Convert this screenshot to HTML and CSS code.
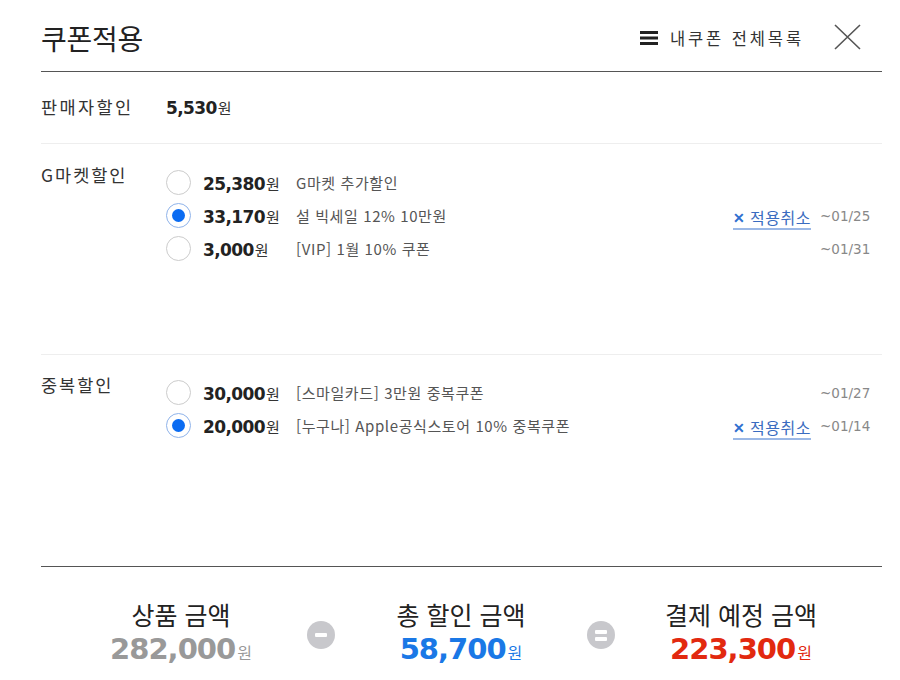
FILE: index.html
```html
<!DOCTYPE html>
<html lang="ko">
<head>
<meta charset="utf-8">
<link rel="stylesheet" href="styles.css">
</head>
<body>
<div class="wrap">
  <header class="head">
    <h1 class="title">쿠폰적용</h1>
    <div class="head-right">
      <a class="mylist">
        <svg class="ham" width="18" height="14" viewBox="0 0 18 14"><rect x="0" y="0" width="18" height="3" fill="#222"/><rect x="0" y="5.5" width="18" height="3" fill="#222"/><rect x="0" y="11" width="18" height="3" fill="#222"/></svg>
        <span>내쿠폰 전체목록</span>
      </a>
      <svg class="close" width="27" height="26" viewBox="0 0 27 26"><path d="M1 1 L26 25 M26 1 L1 25" stroke="#555" stroke-width="1.6" fill="none"/></svg>
    </div>
  </header>

  <section class="sec sec-seller">
    <div class="label">판매자할인</div>
    <div class="amt"><b>5,530</b><span class="won">원</span></div>
  </section>

  <section class="sec sec-gmarket">
    <div class="label">G마켓할인</div>
    <ul class="list">
      <li class="row">
        <span class="radio"></span>
        <span class="amt"><b>25,380</b><span class="won">원</span></span>
        <span class="desc">G마켓 추가할인</span>
        <span class="date"></span>
      </li>
      <li class="row">
        <span class="radio on"></span>
        <span class="amt"><b>33,170</b><span class="won">원</span></span>
        <span class="desc">설 빅세일 12% 10만원</span>
        <a class="cancel"><span class="x">✕</span>적용취소</a>
        <span class="date">~01/25</span>
      </li>
      <li class="row">
        <span class="radio"></span>
        <span class="amt"><b>3,000</b><span class="won">원</span></span>
        <span class="desc">[VIP] 1월 10% 쿠폰</span>
        <span class="date">~01/31</span>
      </li>
    </ul>
  </section>

  <section class="sec sec-dup">
    <div class="label">중복할인</div>
    <ul class="list">
      <li class="row">
        <span class="radio"></span>
        <span class="amt"><b>30,000</b><span class="won">원</span></span>
        <span class="desc">[스마일카드] 3만원 중복쿠폰</span>
        <span class="date">~01/27</span>
      </li>
      <li class="row">
        <span class="radio on"></span>
        <span class="amt"><b>20,000</b><span class="won">원</span></span>
        <span class="desc">[누구나] Apple공식스토어 10% 중복쿠폰</span>
        <a class="cancel"><span class="x">✕</span>적용취소</a>
        <span class="date">~01/14</span>
      </li>
    </ul>
  </section>

  <footer class="sum">
    <div class="col">
      <div class="sum-label">상품 금액</div>
      <div class="sum-amt gray"><b>282,000</b><span class="won">원</span></div>
    </div>
    <div class="op"><span class="circ"><span class="bar"></span></span></div>
    <div class="col">
      <div class="sum-label">총 할인 금액</div>
      <div class="sum-amt blue"><b>58,700</b><span class="won">원</span></div>
    </div>
    <div class="op"><span class="circ eq"><span class="bar"></span><span class="bar"></span></span></div>
    <div class="col">
      <div class="sum-label">결제 예정 금액</div>
      <div class="sum-amt red"><b>223,300</b><span class="won">원</span></div>
    </div>
  </footer>
</div>
</body>
</html>
```

FILE: styles.css
```css
* { box-sizing: border-box; }
html, body { margin: 0; padding: 0; background: #fff; }
body {
  font-family: "Noto Sans CJK KR", "Noto Sans", sans-serif;
  color: #333;
}
.wrap { width: 900px; padding: 0 18px 0 41px; }
ul { list-style: none; margin: 0; padding: 0; }
a { cursor: pointer; }

.head {
  height: 72px;
  border-bottom: 1px solid #555;
  display: flex;
  align-items: center;
  justify-content: space-between;
  padding-top: 4px;
}
.title {
  margin: 0;
  font-size: 28px;
  font-weight: 400;
  color: #222;
  letter-spacing: -0.3px;
}
.head-right { display: flex; align-items: center; }
.mylist { display: flex; align-items: center; color: #333; font-size: 16.5px; letter-spacing: 2.9px; }
.ham { margin-right: 12px; }
.close { margin-left: 30px; margin-right: 21px; margin-top: -2px; }

.sec {
  display: flex;
  align-items: flex-start;
  border-bottom: 1px solid #eee;
}
.label {
  width: 125px;
  font-size: 17.5px;
  line-height: 24px;
  color: #333;
  letter-spacing: 2px;
}
.sec-seller { height: 72px; padding-top: 23px; }
.sec-seller .label { letter-spacing: 2.4px; }
.sec-gmarket { height: 211px; padding-top: 30px; }
.sec-dup { height: 212px; padding-top: 29px; border-bottom: 1px solid #555; }
.sec-gmarket .label, .sec-dup .label { margin-top: -11px; }

.amt b {
  font-family: "DejaVu Sans", sans-serif;
  font-weight: bold;
  font-size: 17px;
  letter-spacing: -0.6px;
  color: #222;
}
.won { font-size: 15px; color: #333; margin-left: 1px; }

.list { flex: 1; }
.row {
  display: flex;
  align-items: center;
  height: 33px;
  margin-top: -8px;
}
.row + .row { margin-top: 0; }
.radio {
  width: 25px; height: 25px;
  border: 1px solid #ccc;
  border-radius: 50%;
  margin-right: 12px;
  flex: none;
  position: relative;
}
.radio.on { border-color: #8fb3ea; }
.radio.on::after {
  content: "";
  position: absolute;
  left: 5px; top: 5px;
  width: 13px; height: 13px;
  border-radius: 50%;
  background: #0b6cf2;
}
.row .amt { width: 93px; flex: none; }
.desc { flex: 1; font-size: 15px; color: #555; font-weight: 400; letter-spacing: 0.6px; }
.cancel {
  display: flex; align-items: center;
  color: #3a6cc0;
  font-size: 16px;
  border-bottom: 2px solid #9bb8e6;
  line-height: 20px;
  margin-top: 6px;
  padding-bottom: 1px;
  margin-right: 9px;
  letter-spacing: 0.5px;
}
.cancel .x { font-size: 14px; font-weight: bold; color: #2f6fd0; margin-right: 5px; }
.date {
  font-family: "DejaVu Sans", sans-serif;
  font-size: 13.5px;
  color: #888;
  width: 50px;
  margin-right: 12px;
  text-align: left;
}

.sum {
  display: flex;
  justify-content: flex-start;
  padding-left: 40px;
  padding-top: 32px;
}
.col { width: 200px; text-align: center; }
.sum-label { font-size: 25px; color: #222; line-height: 30px; }
.sum-amt { margin-top: 2px; line-height: 36px; }
.sum-amt b {
  font-family: "DejaVu Sans", sans-serif;
  font-weight: bold;
  font-size: 29px;
  letter-spacing: -1px;
}
.sum-amt .won { font-size: 16px; margin-left: 2px; }
.gray b { color: #999; }
.gray .won { color: #999; }
.blue b { color: #1a78e6; }
.blue .won { color: #1a78e6; }
.red b { color: #e2290f; }
.red .won { color: #e2290f; }
.op { width: 80px; display: flex; justify-content: center; padding-top: 22px; }
.circ {
  width: 28px; height: 28px; border-radius: 50%;
  background: #c8c8cc;
  display: flex; flex-direction: column; align-items: center; justify-content: center;
  gap: 3px;
}
.bar { width: 12px; height: 4px; background: #fff; border-radius: 1px; }
```
